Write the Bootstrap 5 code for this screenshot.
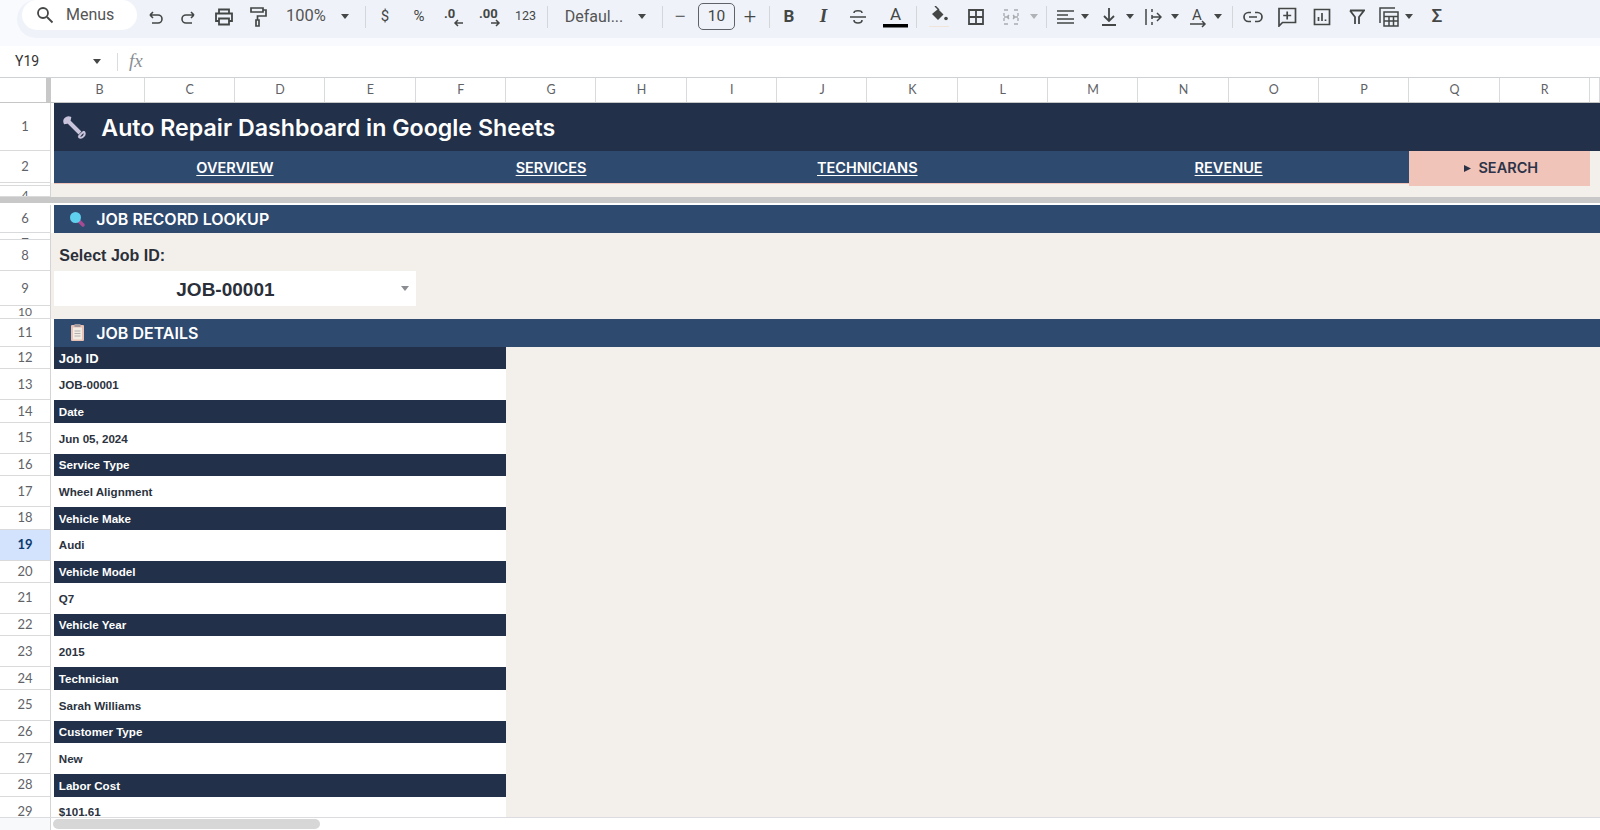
<!DOCTYPE html>
<html lang="en"><head><meta charset="utf-8"><title>Auto Repair Dashboard</title>
<link href="https://cdn.jsdelivr.net/npm/bootstrap@5.3.0/dist/css/bootstrap.min.css" rel="stylesheet">
<style>
html,body{height:830px;overflow:hidden;background:#fff;font-family:"Liberation Sans",sans-serif}
.app{height:830px}
.tbw{flex:none;height:46px;background:#f8fafd}
.tb{height:38px;background:#eff3f9;border-radius:19px 0 0 19px;margin-left:17px;padding:0 0 8px 5px;color:#444746;font-family:Roboto,sans-serif;font-size:14px}
.pill{flex:none;width:115px;height:30px;margin-right:18px;background:#fff;border-radius:15px;padding-left:14px;gap:12px;font-size:16px;color:#555}
.tools{flex:1;display:grid;align-items:center;height:30px;padding-bottom:2px;grid-template-columns:34px 34.5px 34.5px 48px 39px 20px 20px 34px 35px 37px 34.5px 21.5px 47px 48px 20px 18px 36.5px 33.5px 19px 20px 34.5px 34.5px 37px 21px 23px 36.5px 35.5px 23px 12px 19px 20px 24px 21px 23px 21.5px 23.5px 20px 14px 21px 34px 35px 35px 32px 20px 28px 20px}
.ti{width:0;display:flex;justify-content:center;align-items:center;white-space:nowrap;color:#444746}
.ti svg{display:block;flex:none}
.t-zoom{font-size:16.5px;color:#555}.t-font{font-size:16px;color:#555}.t-sym{font-size:15px}.t-num{font-size:12.5px}
.t-op{font-size:22px;font-weight:300}.t-b{font-size:17px;font-weight:700}.t-i{font-size:19px;font-style:italic;font-weight:700;font-family:"Liberation Serif",serif}.t-s{font-size:19px;font-weight:500}
.sep{flex:none;width:1px;height:22px;background:#d3d6da}
.dd{flex:none;width:0;height:0;border-left:4.5px solid transparent;border-right:4.5px solid transparent;border-top:5px solid #444746}
.dd-off{border-top-color:#b0b3b6}
.fsz{flex:none;width:37px;height:27px;border:1px solid #5f6368;border-radius:5px;text-align:center;line-height:25px;font-size:15.5px}
.fb{flex:none;height:31px;background:#fff;font-family:Roboto,sans-serif;font-size:14px;color:#333}
.nm{width:117px;padding-left:15px}
.fx{font-family:"Liberation Serif",serif;font-style:italic;font-size:19px;color:#8a8f94;margin-left:11px}
.vl{width:1px;height:18px;background:#dadce0}
.cols{flex:none;height:26px;border-top:1px solid #cfd2d5;border-bottom:1px solid #c4c7c5;display:grid;grid-template-columns:54.3px repeat(17,90.33px) 1fr;font-family:Lato,sans-serif;font-size:12.5px;color:#5f6368}
.cols>div{display:flex;align-items:center;justify-content:center;border-right:1px solid #d8dadc;padding-left:1px}
.cols>.corner{border-right:5px solid #c8c8c8;margin-right:3.3px;margin-left:46px;padding:0}
.sheet{flex:1;min-height:0;overflow:hidden}
.rw{display:flex}
.rh{flex:none;width:51px;display:flex;align-items:center;justify-content:center;line-height:1;font-family:Lato,sans-serif;font-size:13px;color:#5f6368;border-bottom:1px solid #d9dadb;border-right:1.500px solid #d4d4d4;overflow:hidden;background:#fff}
.rh-top{align-items:flex-start;padding-top:4px}
.rh-sm{font-size:12px}
.rh-sel{background:#d3e3fd;color:#0b3a6e;font-weight:700}
.gut{flex:none;width:3.300px;background:#fff}
.gut-b{background:#f3f0eb}
.ct{flex:1;min-width:0;background:#f3f0eb}
.r1{height:47.500px}.r2{height:32.500px}.r3{height:3px}.r4{height:11px}.r6{height:28px}.r7{height:7px}.r8{height:31px}.r9{height:35px}.r10{height:13px}
.r-h{height:22.400px}.r-v{height:31px}
.titlebar{height:100%;background:#223049;color:#fff;font-family:Inter,sans-serif;font-weight:600;font-size:23.200px;padding-left:7px;gap:15px}
.ttl{padding-top:3px}
.navgrid{height:100%;display:grid;grid-template-columns:361.300px 271px 361.400px 361.300px 181px 1fr;font-family:Inter,sans-serif;font-weight:600;font-size:14.500px}
.navgrid>div{background:#2f4a6f;display:flex;align-items:center;justify-content:center;color:#fff;text-decoration:underline;text-underline-offset:2px;padding-top:3px}
.navgrid>.srch{background:#f0c4b9;color:#2c3247;text-decoration:none;gap:7px;padding-left:3px;padding-top:3px}
.navgrid>.fill{background:#f3f0eb}
.tail-l{flex:1;border-top:1px solid #f0c4b9}
.tail-p{width:181px;background:#f0c4b9}
.tail-r{width:10px}
.sec{height:100%;background:#2f4a6f;color:#fff;font-family:Inter,sans-serif;font-weight:600;font-size:16px;padding-left:14px;gap:10px}
.lbl{padding-left:5px;font-weight:700;font-size:16px;color:#2a2f3a}
.pick{width:361.600px;height:35px;background:#fff;position:relative;font-size:19px;font-weight:700;color:#2a2f3a;padding-left:122px;padding-top:3px}
.pick .dd{position:absolute;right:7px;top:15px;border-top-color:#8a8d91}
.hdc,.vlc{width:451.700px;height:100%;font-weight:700;font-size:11.600px;padding-left:4.500px}
.hdc{background:#223049;color:#fff}
.hdc.hd-lg{font-size:13px;padding-top:2px}
.vlc{background:#fff;color:#2c3340}
.freeze{height:6px;background:#c8c8c8}
.wl{height:2px;background:#fff}
.bot{flex:none;height:13px;background:#fff;border-top:1px solid #dadce0;display:flex}
.bl{width:51px;background:#f8f9fa;border-right:1.500px solid #d4d4d4}
.thumb{width:267px;height:10px;background:#d7d7d7;border-radius:5px;margin:1px 0 0 2px}
</style></head><body>
<div class="app d-flex flex-column">
<div class="tbw"><div class="tb d-flex align-items-center">
 <div class="pill d-flex align-items-center"><svg width="18" height="18" viewBox="0 0 18 18" fill="none" stroke="#444746" stroke-width="1.800"><circle cx="7" cy="7" r="5"/><path d="M11 11l5.500 5.500"/></svg><span>Menus</span></div>
 <div class="tools">
 <div class="ti"><svg width="18" height="18" viewBox="0 0 18 18" fill="none" stroke="#444746" stroke-width="1.600"><path d="M4 5h8a3.500 3.500 0 010 8H6M4 5l3-3M4 5l3 3" transform="translate(0 2)"/></svg></div>
 <div class="ti"><svg width="18" height="18" viewBox="0 0 18 18" fill="none" stroke="#444746" stroke-width="1.600"><path d="M14 5H6a3.500 3.500 0 000 8h6M14 5l-3-3M14 5l-3 3" transform="translate(0 2)"/></svg></div>
 <div class="ti"><svg width="20" height="20" viewBox="0 0 20 20" fill="none" stroke="#444746" stroke-width="1.800"><path d="M5 6V2.500h10V6M5 14H2V6.500h16V14H15M5 11.500h10V17.500H5z"/></svg></div>
 <div class="ti"><svg width="18" height="22" viewBox="0 0 18 22" fill="none" stroke="#444746" stroke-width="1.700"><path d="M2 2h12v4H2zM14 4h3v6H8.500v4M7 14h3v6H7z"/></svg></div>
 <div class="ti t-zoom">100%</div>
 <div class="ti"><span class="dd"></span></div>
 <div class="ti"><span class="sep"></span></div>
 <div class="ti t-sym">$</div>
 <div class="ti t-sym">%</div>
 <div class="ti"><svg width="22" height="24" viewBox="0 0 22 24" fill="none" stroke="#444746" stroke-width="1.500"><text x="1" y="13" font-size="13" font-weight="700" fill="#444746" stroke="none" font-family="Roboto">.0</text><path d="M20 18h-8M15 15l-3 3 3 3"/></svg></div>
 <div class="ti"><svg width="24" height="24" viewBox="0 0 24 24" fill="none" stroke="#444746" stroke-width="1.500"><text x="0" y="13" font-size="13" font-weight="700" fill="#444746" stroke="none" font-family="Roboto">.00</text><path d="M12 18h8M17 15l3 3-3 3"/></svg></div>
 <div class="ti t-num">123</div>
 <div class="ti"><span class="sep"></span></div>
 <div class="ti t-font">Defaul...</div>
 <div class="ti"><span class="dd"></span></div>
 <div class="ti"><span class="sep"></span></div>
 <div class="ti t-op">−</div>
 <div class="ti"><span class="fsz">10</span></div>
 <div class="ti t-op">+</div>
 <div class="ti"><span class="sep"></span></div>
 <div class="ti t-b">B</div>
 <div class="ti t-i">I</div>
 <div class="ti"><svg width="20" height="18" viewBox="0 0 20 18" fill="none" stroke="#444746" stroke-width="1.600"><path d="M2 9h16M14 5c0-3-8-3-8 0M6 12c0 4 8 4 8 0"/></svg></div>
 <div class="ti"><svg width="25" height="26" viewBox="0 0 25 26"><text x="12.500" y="16" text-anchor="middle" font-size="17" fill="#444746" font-family="Roboto">A</text><rect y="20" width="25" height="3.500" fill="#000"/></svg></div>
 <div class="ti"><span class="sep"></span></div>
 <div class="ti"><svg width="20" height="22" viewBox="0 0 20 22" fill="#444746"><path d="M3 8L9 3l5.500 5.500L9 14z"/><path d="M6 0l4 4" stroke="#444746" stroke-width="1.500"/><circle cx="17" cy="12.500" r="1.800"/><rect y="20" width="20" height="1" fill="#f1e4d8"/></svg></div>
 <div class="ti"><svg width="18" height="18" viewBox="0 0 18 18" fill="none" stroke="#444746" stroke-width="1.800"><path d="M2 2h14v14H2zM9 2v14M2 9h14"/></svg></div>
 <div class="ti"><svg width="18" height="18" viewBox="0 0 18 18" fill="none" stroke="#a9adb1" stroke-width="1.400"><path d="M2 2h4M12 2h4M2 16h4M12 16h4M2 5v3M16 5v3M2 10v3M16 10v3M2 9h5M11 9h5M7 7l-2 2 2 2M11 7l2 2-2 2"/></svg></div>
 <div class="ti"><span class="dd dd-off"></span></div>
 <div class="ti"><span class="sep"></span></div>
 <div class="ti"><svg width="17" height="16" viewBox="0 0 17 16" stroke="#444746" stroke-width="1.700"><path d="M0 2h17M0 6h11M0 10h17M0 14h17"/></svg></div>
 <div class="ti"><span class="dd"></span></div>
 <div class="ti"><svg width="18" height="20" viewBox="0 0 18 20" fill="none" stroke="#444746" stroke-width="1.800"><path d="M9 1v12M4 9l5 5 5-5M2 18h14"/></svg></div>
 <div class="ti"><span class="dd"></span></div>
 <div class="ti"><svg width="18" height="18" viewBox="0 0 18 18" fill="none" stroke="#444746" stroke-width="1.500"><path d="M2 1v16M8 1v3M8 7v4M8 14v3M8 9h9M13 5l4 4-4 4"/></svg></div>
 <div class="ti"><span class="dd"></span></div>
 <div class="ti"><svg width="20" height="22" viewBox="0 0 20 22"><text x="9" y="14" text-anchor="middle" font-size="15" fill="#444746" font-family="Roboto">A</text><path d="M2 18h14M14 15l3 3-3 3" stroke="#444746" fill="none" stroke-width="1.500"/></svg></div>
 <div class="ti"><span class="dd"></span></div>
 <div class="ti"><span class="sep"></span></div>
 <div class="ti"><svg width="20" height="12" viewBox="0 0 20 12" fill="none" stroke="#444746" stroke-width="1.700"><path d="M8 1.500H5.500a4.500 4.500 0 000 9H8M12 1.500h2.500a4.500 4.500 0 010 9H12M6 6h8"/></svg></div>
 <div class="ti"><svg width="20" height="20" viewBox="0 0 20 20" fill="none" stroke="#444746" stroke-width="1.700"><path d="M2 1.500h16.500v14H5.500L2 19zM10.200 4.500v8M6.200 8.500h8"/></svg></div>
 <div class="ti"><svg width="18" height="18" viewBox="0 0 18 18" fill="none" stroke="#444746" stroke-width="1.700"><path d="M1.500 1.500h15v15h-15zM5.500 9v4M9 5v8M12.500 11.500v1.500"/></svg></div>
 <div class="ti"><svg width="16" height="16" viewBox="0 0 16 16" fill="none" stroke="#444746" stroke-width="1.800"><path d="M1 1.500h14L10 8v7M6 15V8L1 1.500"/></svg></div>
 <div class="ti"><svg width="20" height="20" viewBox="0 0 20 20" fill="none" stroke="#444746" stroke-width="1.500"><path d="M1 16V1h15"/><path d="M5 5h14v14H5zM5 9.500h14M5 14h14M10 9.500V19M14.500 9.500V19"/></svg></div>
 <div class="ti"><span class="dd"></span></div>
 <div class="ti t-s">Σ</div>
 </div>
</div></div>
<div class="fb d-flex align-items-center"><div class="nm d-flex justify-content-between align-items-center"><span>Y19</span><span class="dd me-3"></span></div><div class="vl"></div><div class="fx">fx</div></div>
<div class="cols"><div class="corner"></div><div>B</div><div>C</div><div>D</div><div>E</div><div>F</div><div>G</div><div>H</div><div>I</div><div>J</div><div>K</div><div>L</div><div>M</div><div>N</div><div>O</div><div>P</div><div>Q</div><div>R</div><div></div></div>
<div class="sheet">
 <div class="rw r1"><div class="rh">1</div><div class="gut"></div><div class="ct"><div class="titlebar d-flex align-items-center"><svg width="25" height="25" viewBox="0 0 25 25" fill="none" stroke="#c9c4dc"><path d="M7 7l12 12" stroke-width="4"/><path d="M9.500 3.500A4.500 4.500 0 003.500 9.500L6 9l3-3z" fill="#c9c4dc" stroke-width="1.500"/><path d="M23 17.500a4 4 0 01-5.500 5.500M23 17.500L20 20M17.500 23l2.500-3" stroke-width="2"/></svg><span class="ttl">Auto Repair Dashboard in Google Sheets</span></div></div></div>
 <div class="rw r2"><div class="rh">2</div><div class="gut"></div><div class="ct"><div class="navgrid"><div>OVERVIEW</div><div>SERVICES</div><div>TECHNICIANS</div><div>REVENUE</div><div class="srch"><svg width="7" height="7" viewBox="0 0 7 7"><path d="M0 0l7 3.500-7 3.500z" fill="#2c3247"/></svg>SEARCH</div><div class="fill"></div></div></div></div>
 <div class="rw r3"><div class="rh"></div><div class="gut gut-b"></div><div class="ct d-flex"><div class="tail-l"></div><div class="tail-p"></div><div class="tail-r"></div></div></div>
 <div class="rw r4"><div class="rh rh-top">4</div><div class="gut gut-b"></div><div class="ct"></div></div>
 <div class="freeze"></div><div class="wl"></div>
 <div class="rw r6"><div class="rh">6</div><div class="gut"></div><div class="ct"><div class="sec d-flex align-items-center"><svg width="18" height="18" viewBox="0 0 18 18"><path d="M11 11l4 4" stroke="#a84b94" stroke-width="3.500" stroke-linecap="round"/><circle cx="7.500" cy="7.500" r="5.500" fill="#5fd0ee"/></svg><span>JOB RECORD LOOKUP</span></div></div></div>
 <div class="rw r7"><div class="rh rh-top">7</div><div class="gut gut-b"></div><div class="ct"></div></div>
 <div class="rw r8"><div class="rh">8</div><div class="gut gut-b"></div><div class="ct lbl d-flex align-items-center">Select Job ID:</div></div>
 <div class="rw r9"><div class="rh">9</div><div class="gut gut-b"></div><div class="ct"><div class="pick d-flex align-items-center">JOB-00001<span class="dd"></span></div></div></div>
 <div class="rw r10"><div class="rh rh-sm">10</div><div class="gut gut-b"></div><div class="ct"></div></div>
 <div class="rw r6"><div class="rh">11</div><div class="gut"></div><div class="ct"><div class="sec d-flex align-items-center"><svg width="18" height="18" viewBox="0 0 18 18"><rect x="3" y="1" width="13" height="16" rx="1" fill="#e8c0b4"/><rect x="5" y="3.500" width="9" height="12" fill="#f1ede4"/><path d="M6.500 7h6M6.500 9.500h6M6.500 12h6" stroke="#b5aeb0"/><rect x="6.500" y="0" width="6" height="3" fill="#a39aa0"/></svg><span>JOB DETAILS</span></div></div></div>
 <div class="rw r-h"><div class="rh">12</div><div class="gut"></div><div class="ct"><div class="hdc hd-lg d-flex align-items-center">Job ID</div></div></div>
 <div class="rw r-v"><div class="rh">13</div><div class="gut"></div><div class="ct"><div class="vlc d-flex align-items-center">JOB-00001</div></div></div>
 <div class="rw r-h"><div class="rh">14</div><div class="gut"></div><div class="ct"><div class="hdc d-flex align-items-center">Date</div></div></div>
 <div class="rw r-v"><div class="rh">15</div><div class="gut"></div><div class="ct"><div class="vlc d-flex align-items-center">Jun 05, 2024</div></div></div>
 <div class="rw r-h"><div class="rh">16</div><div class="gut"></div><div class="ct"><div class="hdc d-flex align-items-center">Service Type</div></div></div>
 <div class="rw r-v"><div class="rh">17</div><div class="gut"></div><div class="ct"><div class="vlc d-flex align-items-center">Wheel Alignment</div></div></div>
 <div class="rw r-h"><div class="rh">18</div><div class="gut"></div><div class="ct"><div class="hdc d-flex align-items-center">Vehicle Make</div></div></div>
 <div class="rw r-v"><div class="rh rh-sel">19</div><div class="gut"></div><div class="ct"><div class="vlc d-flex align-items-center">Audi</div></div></div>
 <div class="rw r-h"><div class="rh">20</div><div class="gut"></div><div class="ct"><div class="hdc d-flex align-items-center">Vehicle Model</div></div></div>
 <div class="rw r-v"><div class="rh">21</div><div class="gut"></div><div class="ct"><div class="vlc d-flex align-items-center">Q7</div></div></div>
 <div class="rw r-h"><div class="rh">22</div><div class="gut"></div><div class="ct"><div class="hdc d-flex align-items-center">Vehicle Year</div></div></div>
 <div class="rw r-v"><div class="rh">23</div><div class="gut"></div><div class="ct"><div class="vlc d-flex align-items-center">2015</div></div></div>
 <div class="rw r-h"><div class="rh">24</div><div class="gut"></div><div class="ct"><div class="hdc d-flex align-items-center">Technician</div></div></div>
 <div class="rw r-v"><div class="rh">25</div><div class="gut"></div><div class="ct"><div class="vlc d-flex align-items-center">Sarah Williams</div></div></div>
 <div class="rw r-h"><div class="rh">26</div><div class="gut"></div><div class="ct"><div class="hdc d-flex align-items-center">Customer Type</div></div></div>
 <div class="rw r-v"><div class="rh">27</div><div class="gut"></div><div class="ct"><div class="vlc d-flex align-items-center">New</div></div></div>
 <div class="rw r-h"><div class="rh">28</div><div class="gut"></div><div class="ct"><div class="hdc d-flex align-items-center">Labor Cost</div></div></div>
 <div class="rw r-v"><div class="rh">29</div><div class="gut"></div><div class="ct"><div class="vlc d-flex align-items-center">$101.61</div></div></div>
</div>
<div class="bot"><div class="bl"></div><div class="thumb"></div></div>
</div>
<script src="https://cdn.jsdelivr.net/npm/bootstrap@5.3.0/dist/js/bootstrap.bundle.min.js"></script>
</body></html>
